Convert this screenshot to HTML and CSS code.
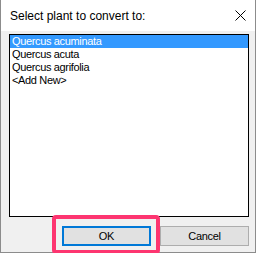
FILE: index.html
```html
<!DOCTYPE html>
<html lang="en">
<head>
    <meta charset="UTF-8">
    <title>Select plant</title>
    <link rel="stylesheet" href="styles.css">
</head>
<body>
    <div class="dialog">
        <div class="titlebar">
            <span class="title">Select plant to convert to:</span>
            <svg class="close" width="11" height="11" viewBox="0 0 11 11">
                <path d="M0.5 0.5 L10.5 10.5 M10.5 0.5 L0.5 10.5" stroke="#000" stroke-width="1" fill="none"/>
            </svg>
        </div>
        <div class="content">
            <ul class="listbox">
                <li class="selected">Quercus acuminata</li>
                <li>Quercus acuta</li>
                <li>Quercus agrifolia</li>
                <li>&lt;Add New&gt;</li>
            </ul>
            <div class="buttons">
                <div class="ok-wrap">
                    <button class="btn btn-default">OK</button>
                    <div class="callout"></div>
                </div>
                <button class="btn">Cancel</button>
            </div>
        </div>
    </div>
</body>
</html>
```

FILE: styles.css
```css
body, html {
    margin: 0;
    background-color: white;
    font-family: "Liberation Sans", Arial, sans-serif;
}
.dialog {
    width: 254px;
    height: 252px;
    border: 1px solid #8c8c8c;
    border-top: none;
    background-color: #f0f0f0;
}
.titlebar {
    height: 31px;
    background-color: white;
    display: flex;
    align-items: flex-start;
    justify-content: space-between;
    box-sizing: border-box;
    padding: 9px 9px 0 9px;
}
.title {
    font-size: 12px;
    line-height: 14px;
    color: #000;
}
.close {
    margin-top: 1px;
}
.content {
    padding: 3px 6px 0 8px;
}
.listbox {
    list-style: none;
    margin: 0;
    padding: 0;
    height: 181px;
    border: 1px solid #000;
    background-color: white;
}
.listbox li {
    height: 13px;
    line-height: 13px;
    font-size: 11px;
    letter-spacing: -0.35px;
    padding-left: 2px;
    color: #000;
}
.listbox li.selected {
    background-color: #3399ff;
    color: white;
}
.buttons {
    display: flex;
    justify-content: flex-end;
    gap: 9px;
    margin-top: 9px;
}
.ok-wrap {
    position: relative;
}
.btn {
    display: block;
    width: 89px;
    height: 20px;
    margin: 0;
    padding: 0;
    font-family: "Liberation Sans", Arial, sans-serif;
    font-size: 11px;
    letter-spacing: -0.3px;
    color: #000;
    background-color: #e1e1e1;
    border: 1px solid #adadad;
    box-sizing: border-box;
}
.btn-default {
    border: 2px solid #0078d7;
}
.callout {
    position: absolute;
    left: -10px;
    top: -11px;
    width: 108px;
    height: 39px;
    border: 4px solid #fd3570;
    border-radius: 4px;
    box-sizing: border-box;
}
```
